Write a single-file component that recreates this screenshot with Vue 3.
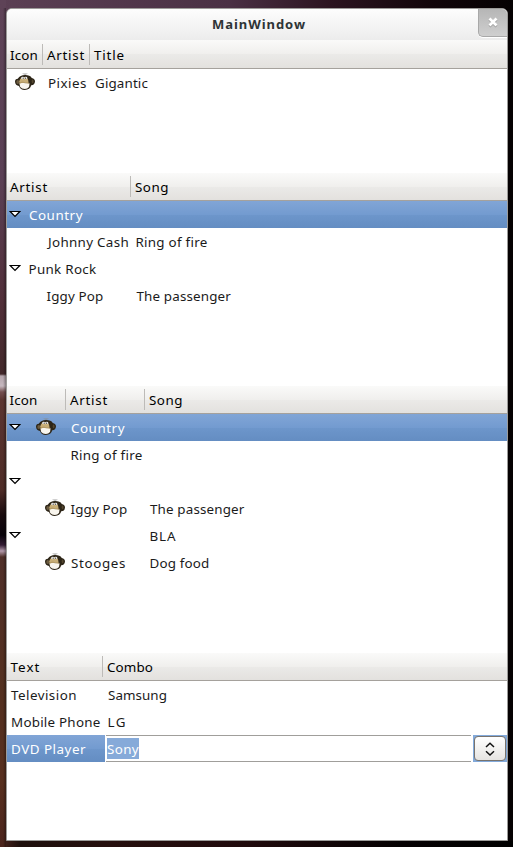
<script setup>
// Stretches a label to a given advance width by spreading its letters.
const vFit = {
  mounted(el, { value }) {
    if (!value) return
    const natural = el.getBoundingClientRect().width
    el.style.letterSpacing = (value - natural) / el.textContent.length + 'px'
  },
}

// Each cell: t = label, w = label width, x = left inset, icon = monkey inset, open = expander
const tables = [
  {
    name: 'songs',
    head: [{ t: 'Icon', w: 28, x: 3 }, { t: 'Artist', w: 38, x: 4 }, { t: 'Title', w: 31, x: 4 }],
    rows: [{ cells: [{ icon: 8 }, { t: 'Pixies', w: 39, x: 5 }, { t: 'Gigantic', w: 53, x: 5 }] }],
  },
  {
    name: 'genres',
    head: [{ t: 'Artist', w: 38, x: 3 }, { t: 'Song', w: 34, x: 4 }],
    rows: [
      { sel: true, cells: [{ open: true, t: 'Country', w: 54, x: 22 }, {}] },
      { cells: [{ t: 'Johnny Cash', w: 81, x: 41 }, { t: 'Ring of fire', w: 72, x: 4.5 }] },
      { cells: [{ open: true, t: 'Punk Rock', w: 68, x: 21.5 }, {}] },
      { cells: [{ t: 'Iggy Pop', w: 57, x: 39.5 }, { t: 'The passenger', w: 94.5, x: 5.5 }] },
    ],
  },
  {
    name: 'icons',
    head: [{ t: 'Icon', w: 28, x: 2.5 }, { t: 'Artist', w: 38, x: 4 }, { t: 'Song', w: 34, x: 4 }],
    rows: [
      { sel: true, cells: [{ open: true, icon: 29 }, { t: 'Country', w: 54, x: 5 }, {}] },
      { cells: [{}, { t: 'Ring of fire', w: 72, x: 4.5 }, {}] },
      { cells: [{ open: true }, {}, {}] },
      { cells: [{ icon: 38 }, { t: 'Iggy Pop', w: 57, x: 4.5 }, { t: 'The passenger', w: 94.5, x: 5 }] },
      { cells: [{ open: true }, {}, { t: 'BLA', w: 27, x: 4.5 }] },
      { cells: [{ icon: 38 }, { t: 'Stooges', w: 55, x: 5 }, { t: 'Dog food', w: 60, x: 4.5 }] },
    ],
  },
  {
    name: 'devices',
    head: [{ t: 'Text', w: 30, x: 3.5 }, { t: 'Combo', w: 46, x: 4 }],
    rows: [
      { cells: [{ t: 'Television', w: 66, x: 4 }, { t: 'Samsung', w: 59, x: 5 }] },
      { cells: [{ t: 'Mobile Phone', w: 89.5, x: 4 }, { t: 'LG', w: 19.5, x: 4.5 }] },
      { cells: [{ sel: true, t: 'DVD Player', w: 75, x: 4 }, { edit: true, t: 'Sony', w: 32 }] },
    ],
  },
]
</script>

<template>
  <div class="desktop">
    <div class="window">
      <header class="titlebar">
        <span v-fit="94" class="title">MainWindow</span>
        <button class="close" aria-label="Close">
          <svg width="10" height="11" viewBox="0 0 10 11">
            <path class="x-shade" d="M1.5 2.5L8.5 9.5M8.5 2.5L1.5 9.5" />
            <path class="x-face" d="M1.5 1.5L8.5 8.5M8.5 1.5L1.5 8.5" />
          </svg>
        </button>
      </header>

      <section v-for="tb in tables" :key="tb.name" class="table" :class="tb.name">
        <div class="head line">
          <div v-for="(c, i) in tb.head" :key="i" class="cell" :style="{ paddingLeft: c.x + 'px' }">
            <span v-fit="c.w">{{ c.t }}</span>
          </div>
        </div>
        <div v-for="(r, ri) in tb.rows" :key="ri" class="row line" :class="{ selected: r.sel }">
          <div
            v-for="(c, i) in r.cells"
            :key="i"
            class="cell"
            :class="{ selected: c.sel, editing: c.edit }"
            :style="{ paddingLeft: (c.x || c.icon || 0) + 'px' }"
          >
            <svg v-if="c.open" class="expander" width="12" height="8" viewBox="0 0 12 8">
              <path d="M1.2 1.5H10.8L6 6.3Z" />
            </svg>
            <svg v-if="c.icon" class="monkey" width="20" height="18" viewBox="0 0 20 18">
              <path d="M8 .3L9 1.5M12 .3L11 1.5M10 0V2" stroke="#888" stroke-width=".8" />
              <path d="M0 8.8Q0 6 2.8 5.8Q5.2 2.2 10 2.1Q14.8 2 16.8 4.9Q20 5.6 20 8.6Q19.7 12.2 16.3 12.3Q15 16.8 9.8 16.9Q5.3 16.9 4 13Q.4 12.6 0 8.8Z" fill="#2e2618" />
              <ellipse cx="2.8" cy="9" rx="1.5" ry="2.1" fill="#6b5b40" />
              <ellipse cx="17.6" cy="8.4" rx=".9" ry="1.8" fill="#54472f" />
              <path d="M4.2 8.5Q4.8 4 9.5 3.9Q12.8 4 13.4 8L13.5 11H4.8Z" fill="#c8ae76" />
              <ellipse cx="7.7" cy="5" rx="1.5" ry="1.3" fill="#eee" />
              <ellipse cx="10.8" cy="5" rx="1.5" ry="1.3" fill="#eee" />
              <circle cx="8.2" cy="5.2" r=".6" fill="#333" />
              <circle cx="10.6" cy="5.2" r=".6" fill="#333" />
              <path d="M4.4 10.5Q9.5 9.2 14.6 10.5L14 14Q12.5 15.9 9.8 15.9Q6.7 15.9 5.2 14Z" fill="#f9f6ee" />
              <path d="M4.6 10.4Q6 8.9 8 9.2L10 9.8L14.3 10.2" fill="none" stroke="#a68c55" stroke-width=".8" />
            </svg>
            <template v-if="c.edit">
              <div class="entry"><span class="marked"><span v-fit="c.w">{{ c.t }}</span></span></div>
              <div class="combo">
                <button class="arrows" aria-label="Choose">
                  <svg width="10" height="14" viewBox="0 0 10 14">
                    <path d="M1 5L5 1.3L9 5M1 9.3L5 13L9 9.3" />
                  </svg>
                </button>
              </div>
            </template>
            <span v-else-if="c.t" v-fit="c.w">{{ c.t }}</span>
          </div>
        </div>
      </section>
    </div>
  </div>
</template>

<style>
body {
  background: #000;
}
</style>

<style scoped>
.desktop {
  box-sizing: border-box;
  width: 513px;
  height: 847px;
  padding: 8px 5px 6px 6px;
  background:
    linear-gradient(90deg, transparent 3px, rgba(0, 0, 0, 0.35) 6px) 0 8px / 6px 839px no-repeat,
    linear-gradient(180deg, #5e4357 0, #5a4055 180px, #512f39 300px, #42282a 374px, #b5a5ac 376px, #c6b8bf 386px, #744f50 392px, #5b3530 400px, #4e2c27 490px, #180a0d 515px, #08030a 535px, #341d34 545px, #b49aab 551px, #503029 557px, #54301f 700px, #58301f 780px, #4b241c 847px) 0 0 / 6px 847px no-repeat,
    linear-gradient(90deg, #4a241d 0, #1e0f0c 20px, #260f0e 110px, #200a0c 250px, #050102 400px, #000 513px) 0 841px / 513px 6px no-repeat,
    linear-gradient(90deg, #5b4054 0, #4a3044 230px, #2c1420 330px, #12060a 430px, #050102 513px) 0 0 / 513px 12px no-repeat,
    #050102;
}
.window {
  box-sizing: border-box;
  display: flex;
  flex-direction: column;
  width: 502px;
  height: 833px;
  border: 1px solid #9c9b99;
  border-radius: 6px 6px 0 0;
  background: #fff;
  overflow: hidden;
  font: 13.4px/26px "Noto Sans", "Open Sans", sans-serif;
  color: #1b1b1b;
  white-space: pre;
}
.titlebar {
  display: grid;
  grid-template-columns: 1fr 29px;
  height: 31px;
  background: linear-gradient(#fdfdfd, #ececec);
}
.title {
  justify-self: start;
  margin-left: 205px;
  font-size: 13px;
  line-height: 30px;
  font-weight: 700;
  color: #2e3436;
}
.close {
  display: flex;
  box-sizing: border-box;
  align-items: center;
  justify-content: center;
  width: 29px;
  height: 28px;
  padding: 0 0 0 0;
  border: 1px solid #a8a8a8;
  border-width: 0 0 1px 1px;
  border-radius: 0 0 0 5px;
  background: linear-gradient(#b6b6b6, #cfcfcf);
  box-shadow: 0 1px 0 #fff;
}
.close svg {
  fill: none;
  stroke-width: 2.7;
}
.x-shade {
  stroke: #999;
}
.x-face {
  stroke: #fff;
}
.line {
  display: grid;
}
.table {
  flex: none;
}
.songs {
  height: 133px;
}
.genres {
  height: 213px;
}
.icons {
  height: 267px;
}
.devices {
  height: 187px;
}
.songs .line {
  grid-template-columns: 36px 47px 1fr;
}
.genres .line {
  grid-template-columns: 124px 1fr;
}
.icons .line {
  grid-template-columns: 59px 79px 1fr;
}
.devices .line {
  grid-template-columns: 96px 1fr;
}
.head {
  box-sizing: border-box;
  height: 28px;
  border-bottom: 1px solid #a5a19c;
  background: linear-gradient(#fafaf9, #f0efed 50%, #ebeae8 51%, #e3e1de);
  color: #000;
}
.songs .head {
  height: 29px;
  padding-top: 1px;
}
.cell {
  position: relative;
  box-sizing: border-box;
  min-width: 0;
  height: 27px;
  line-height: 29px;
}
.head .cell:not(:last-child) {
  background: linear-gradient(#bdbbb8, #bdbbb8) right 3px / 1px 21px no-repeat;
}
.row {
  height: 27px;
}
.selected {
  background: linear-gradient(#81a5d6, #739bd0 50%, #6d96cb 51%, #648dc2);
  color: #fff;
}
.expander {
  position: absolute;
  left: 1.5px;
  top: 9px;
  fill: #fff;
  stroke: #000;
  stroke-width: 1.2;
}
.monkey {
  display: block;
  margin-top: 4px;
}
.devices .row .selected {
  width: 98px;
}
.editing {
  display: flex;
  margin-left: 3px;
}
.entry {
  box-sizing: border-box;
  flex: 1;
  height: 27px;
  margin-right: 2px;
  padding: 2px 0 0 1px;
  border: solid #a09e9b;
  border-width: 1px 0;
  line-height: 23px;
}
.marked {
  display: block;
  width: 32px;
  height: 21px;
  background: #86aad9;
  color: #fff;
}
.combo {
  width: 34px;
  height: 27px;
  background: #83aadb;
}
.arrows {
  display: flex;
  box-sizing: border-box;
  align-items: center;
  justify-content: center;
  width: 32px;
  height: 25px;
  margin: 1px;
  padding: 0;
  border: 1px solid #77736e;
  border-radius: 4px;
  background: linear-gradient(#fff, #e6e4e1);
}
.arrows svg {
  fill: none;
  stroke: #111;
  stroke-width: 1.5;
}
</style>
